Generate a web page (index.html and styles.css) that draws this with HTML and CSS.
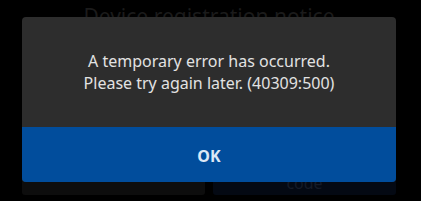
FILE: index.html
```html
<!DOCTYPE html>
<html lang="en">
<head>
<meta charset="utf-8">
<link rel="stylesheet" href="styles.css">
</head>
<body>
<div class="page">
  <h1 class="title">Device registration notice</h1>
  <div class="actions">
    <div class="panel panel-left"></div>
    <div class="panel panel-right"><span class="panel-label">code</span></div>
  </div>
</div>
<div class="dialog">
  <div class="message">A temporary error has occurred.<br>Please try again later. (40309:500)</div>
  <div class="ok">OK</div>
</div>
</body>
</html>
```
FILE: styles.css
```css
html, body {
  margin: 0;
  padding: 0;
  background: #000;
  width: 421px;
  height: 201px;
  overflow: hidden;
  font-family: "Noto Sans", "Open Sans", sans-serif;
}
.page {
  width: 374px;
  margin-left: 22px;
  display: flex;
  flex-direction: column;
  height: 195px;
}
.title {
  margin: 0;
  padding-top: 2px;
  font-size: 21px;
  font-weight: 400;
  line-height: 28px;
  text-align: center;
  color: #1b1b1b;
}
.actions {
  margin-top: auto;
  display: flex;
  gap: 8px;
  height: 46px;
}
.panel {
  flex: 1;
  border-radius: 3px;
}
.panel-left {
  background: #0d0d0d;
}
.panel-right {
  background: #040913;
  display: flex;
  align-items: flex-end;
  justify-content: center;
  padding-bottom: 2px;
}
.panel-label {
  color: #151b28;
  font-size: 16px;
  line-height: 19px;
  text-align: center;
}
.dialog {
  position: absolute;
  left: 22px;
  top: 17px;
  width: 374px;
  height: 165px;
  border-radius: 4px;
  overflow: hidden;
  display: flex;
  flex-direction: column;
  background: #2d2d2d;
}
.message {
  height: 110px;
  display: flex;
  align-items: center;
  justify-content: center;
  text-align: center;
  color: #e2e2e2;
  font-size: 16px;
  line-height: 22px;
}
.ok {
  flex: 1;
  background: #014d9c;
  color: #dce8f6;
  font-weight: 700;
  font-size: 16px;
  display: flex;
  align-items: center;
  justify-content: center;
  padding-top: 2px;
}
```
